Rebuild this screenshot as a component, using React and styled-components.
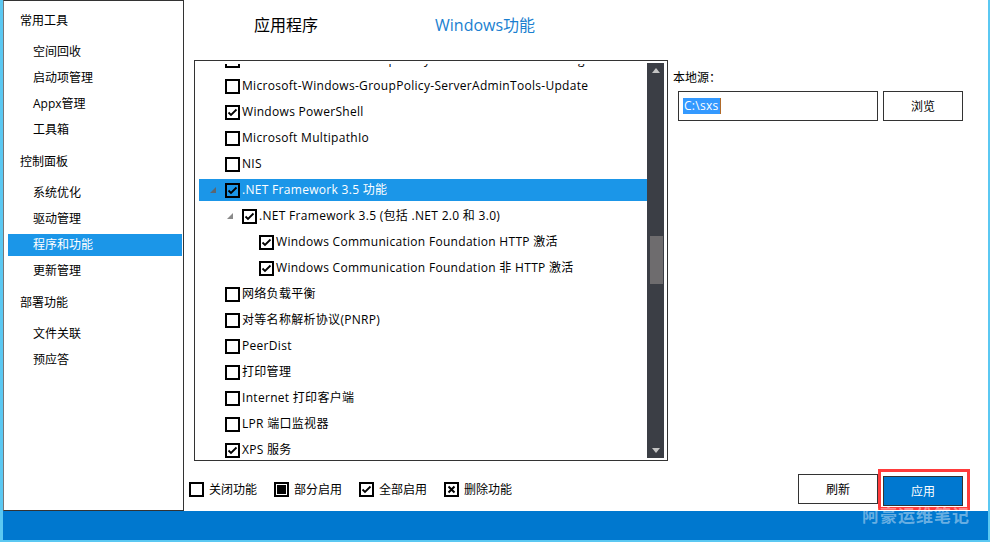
import React, { useLayoutEffect, useRef } from "react";
import styled, { createGlobalStyle } from "styled-components";

const GlobalStyle = createGlobalStyle`
  html, body {
    margin: 0;
    padding: 0;
    background: #fff;
  }
  body {
    font-family: "Open Sans", "Noto Sans CJK SC", sans-serif;
    font-size: 12px;
    color: #000;
  }
`;

const navGroups = [
  { title: "常用工具", items: ["空间回收", "启动项管理", "Appx管理", "工具箱"] },
  { title: "控制面板", items: ["系统优化", "驱动管理", "程序和功能", "更新管理"] },
  { title: "部署功能", items: ["文件关联", "预应答"] },
];

const features = [
  { label: "Microsoft-Windows-GroupPolicy-ServerAdminTools-Management", level: 0 },
  { label: "Microsoft-Windows-GroupPolicy-ServerAdminTools-Update", level: 0 },
  { label: "Windows PowerShell", level: 0, checked: true },
  { label: "Microsoft MultipathIo", level: 0 },
  { label: "NIS", level: 0 },
  { label: ".NET Framework 3.5 功能", level: 0, checked: true, expanded: true, selected: true },
  { label: ".NET Framework 3.5 (包括 .NET 2.0 和 3.0)", level: 1, checked: true, expanded: true },
  { label: "Windows Communication Foundation HTTP 激活", level: 2, checked: true },
  { label: "Windows Communication Foundation 非 HTTP 激活", level: 2, checked: true },
  { label: "网络负载平衡", level: 0 },
  { label: "对等名称解析协议(PNRP)", level: 0 },
  { label: "PeerDist", level: 0 },
  { label: "打印管理", level: 0 },
  { label: "Internet 打印客户端", level: 0 },
  { label: "LPR 端口监视器", level: 0 },
  { label: "XPS 服务", level: 0, checked: true },
];

const CheckMark = () => (
  <svg width="11" height="11" viewBox="0 0 11 11">
    <polyline points="1.5,5.5 4,8 9.5,2.5" fill="none" stroke="#000" strokeWidth="1.8" />
  </svg>
);

const Expander = ({ selected }) => (
  <svg width="6" height="6" viewBox="0 0 6 6">
    <polygon points="6,0 6,6 0,6" fill={selected ? "#5d6670" : "#8a8a8a"} />
  </svg>
);

const App = () => {
  const viewportRef = useRef(null);

  useLayoutEffect(() => {
    if (viewportRef.current) viewportRef.current.scrollTop = 15;
  }, []);

  return (
    <>
      <GlobalStyle />
      <Window>
        <Body>
          <Sidebar>
            {navGroups.map((group) => (
              <Group key={group.title}>
                <GroupTitle>{group.title}</GroupTitle>
                {group.items.map((item) => (
                  <NavItem key={item} $active={item === "程序和功能"}>
                    {item}
                  </NavItem>
                ))}
              </Group>
            ))}
          </Sidebar>

          <Main>
            <TabBar>
              <Tab>应用程序</Tab>
              <Tab $active>Windows功能</Tab>
            </TabBar>

            <ContentRow>
              <TreeBox>
                <Viewport ref={viewportRef}>
                  {features.map((f) => (
                    <Row key={f.label} $level={f.level} $selected={f.selected}>
                      <ExpanderSlot>{f.expanded && <Expander selected={f.selected} />}</ExpanderSlot>
                      <Box>{f.checked && <CheckMark />}</Box>
                      <RowText>{f.label}</RowText>
                    </Row>
                  ))}
                </Viewport>
                <Scrollbar>
                  <ArrowButton>
                    <svg width="8" height="5" viewBox="0 0 8 5">
                      <polygon points="4,0 8,5 0,5" fill="#c4c4c4" />
                    </svg>
                  </ArrowButton>
                  <Track>
                    <Thumb $offset={158} />
                  </Track>
                  <ArrowButton>
                    <svg width="8" height="5" viewBox="0 0 8 5">
                      <polygon points="0,0 8,0 4,5" fill="#c4c4c4" />
                    </svg>
                  </ArrowButton>
                </Scrollbar>
              </TreeBox>

              <SourcePanel>
                <SourceLabel>本地源：</SourceLabel>
                <SourceRow>
                  <PathInput>
                    <Selection>C:\sxs</Selection>
                  </PathInput>
                  <Button>浏览</Button>
                </SourceRow>
              </SourcePanel>
            </ContentRow>

            <BottomBar>
              <Legend>
                <LegendItem>
                  <Box />
                  关闭功能
                </LegendItem>
                <LegendItem>
                  <Box>
                    <PartialFill />
                  </Box>
                  部分启用
                </LegendItem>
                <LegendItem>
                  <Box>
                    <CheckMark />
                  </Box>
                  全部启用
                </LegendItem>
                <LegendItem>
                  <Box>
                    <svg width="9" height="9" viewBox="0 0 9 9">
                      <path d="M1.5 1.5 L7.5 7.5 M7.5 1.5 L1.5 7.5" stroke="#000" strokeWidth="2" />
                    </svg>
                  </Box>
                  删除功能
                </LegendItem>
              </Legend>

              <Actions>
                <Button>刷新</Button>
                <Highlight>
                  <Button $primary>应用</Button>
                </Highlight>
              </Actions>
            </BottomBar>
          </Main>
        </Body>
        <Footer />
        <Watermark>阿豪运维笔记</Watermark>
      </Window>
    </>
  );
};

export default App;

const Window = styled.div`
  position: relative;
  width: 990px;
  height: 542px;
  box-sizing: border-box;
  border-left: 3px solid #5bc8f2;
  border-right: 2px solid #5bc8f2;
  border-bottom: 2px solid #5bc8f2;
  display: flex;
  flex-direction: column;
  background: #fff;
  overflow: hidden;
`;

const Body = styled.div`
  display: flex;
  height: 511px;
`;

const Sidebar = styled.nav`
  width: 181px;
  box-sizing: border-box;
  border: 1px solid #333;
  border-left-color: #777;
  padding-top: 9px;
  display: flex;
  flex-direction: column;
`;

const Group = styled.div`
  display: flex;
  flex-direction: column;
  margin-bottom: 6px;
`;

const GroupTitle = styled.div`
  height: 22px;
  line-height: 22px;
  padding-left: 16px;
  margin-bottom: 9px;
`;

const NavItem = styled.div`
  height: 22px;
  line-height: 22px;
  margin: 0 1px 4px 4px;
  padding-left: 25px;
  background: ${(p) => (p.$active ? "#1b96e8" : "transparent")};
  color: ${(p) => (p.$active ? "#fff" : "#000")};
`;

const Main = styled.main`
  flex: 1;
  display: flex;
  flex-direction: column;
`;

const TabBar = styled.div`
  height: 48px;
  margin-bottom: 12px;
  padding-left: 70px;
  display: flex;
  align-items: center;
  gap: 117px;
`;

const Tab = styled.div`
  font-size: 16px;
  color: ${(p) => (p.$active ? "#1a7fd0" : "#000")};
`;

const ContentRow = styled.div`
  display: flex;
  height: 401px;
`;

const TreeBox = styled.div`
  margin-left: 10px;
  width: 474px;
  box-sizing: border-box;
  border: 1px solid #333;
  display: flex;
`;

const Viewport = styled.div`
  flex: 1;
  margin-top: 3px;
  overflow: hidden;
  padding-left: 4px;
  letter-spacing: 0.3px;
`;

const Row = styled.div`
  height: 22px;
  margin-bottom: 4px;
  padding-left: ${(p) => 11 + p.$level * 17}px;
  display: flex;
  align-items: center;
  white-space: nowrap;
  background: ${(p) => (p.$selected ? "#1b96e8" : "transparent")};
  color: ${(p) => (p.$selected ? "#fff" : "#000")};
`;

const ExpanderSlot = styled.span`
  width: 6px;
  height: 6px;
  margin-right: 9px;
  display: flex;
`;

const Box = styled.span`
  width: 15px;
  height: 15px;
  flex: none;
  box-sizing: border-box;
  border: 2px solid #000;
  display: flex;
  align-items: center;
  justify-content: center;
`;

const PartialFill = styled.span`
  width: 9px;
  height: 9px;
  background: #000;
`;

const RowText = styled.span`
  margin-left: 2px;
  line-height: 22px;
`;

const Scrollbar = styled.div`
  width: 17px;
  margin: 2px 3px 2px 0;
  background: #3b3e45;
  display: flex;
  flex-direction: column;
`;

const ArrowButton = styled.div`
  height: 15px;
  display: flex;
  align-items: center;
  justify-content: center;
`;

const Track = styled.div`
  flex: 1;
  display: flex;
  flex-direction: column;
  align-items: flex-end;
`;

const Thumb = styled.div`
  width: 13px;
  height: 48px;
  margin-top: ${(p) => p.$offset}px;
  margin-right: 1px;
  background: #6e6c6e;
`;

const SourcePanel = styled.div`
  flex: 1;
  padding: 9px 0 0 5px;
  display: flex;
  flex-direction: column;
`;

const SourceLabel = styled.div`
  line-height: 18px;
  margin-bottom: 4px;
`;

const SourceRow = styled.div`
  display: flex;
  gap: 5px;
  padding-left: 5px;
`;

const PathInput = styled.div`
  width: 200px;
  height: 30px;
  box-sizing: border-box;
  border: 1px solid #333;
  padding-left: 4px;
  display: flex;
  align-items: center;
  letter-spacing: 0.3px;
`;

const Selection = styled.span`
  background: #3399ff;
  color: #fff;
  line-height: 16px;
  padding: 0 1px;
  border-right: 1px solid #b06a2a;
`;

const Button = styled.button`
  width: 80px;
  height: 30px;
  box-sizing: border-box;
  padding: 0;
  border: 1px solid #333;
  background: ${(p) => (p.$primary ? "#0078d0" : "#fff")};
  color: ${(p) => (p.$primary ? "#fff" : "#000")};
  font-family: inherit;
  font-size: 12px;
`;

const BottomBar = styled.div`
  flex: 1;
  padding: 6px 18px 0 5px;
  display: flex;
  align-items: center;
  justify-content: space-between;
`;

const Legend = styled.div`
  display: flex;
  gap: 17px;
`;

const LegendItem = styled.div`
  display: flex;
  align-items: center;
  gap: 5px;
`;

const Actions = styled.div`
  display: flex;
  align-items: center;
`;

const Highlight = styled.div`
  display: flex;
  border: 3px solid #ff3b3b;
  padding: 4px 4px 1px 2px;
`;

const Footer = styled.footer`
  height: 29px;
  background: #0078cf;
`;

const Watermark = styled.div`
  position: absolute;
  right: 18px;
  bottom: 13px;
  font-family: "Noto Sans CJK SC", sans-serif;
  font-size: 17px;
  font-weight: 700;
  letter-spacing: 1px;
  color: rgba(255, 255, 255, 0.42);
`;
